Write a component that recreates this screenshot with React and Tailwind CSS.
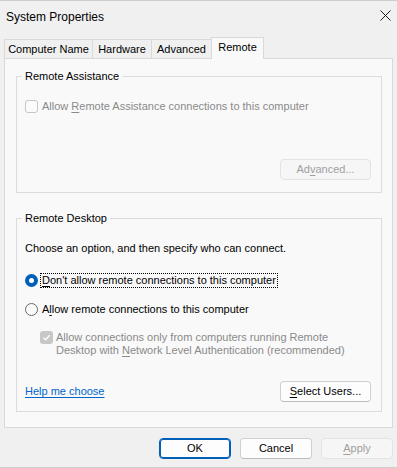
import { useState } from 'react';

const FONT = { fontFamily: '"Liberation Sans", Arial, sans-serif' };

function Tab({ label, selected }) {
  if (selected) {
    return (
      <div className="relative z-10 -mb-px h-[22px] w-[53px] border border-b-0 border-[#d9d9d9] bg-[#f9f9f9] flex items-center justify-center whitespace-nowrap pb-[2px] text-[11px] text-black">
        {label}
      </div>
    );
  }
  return (
    <div className="h-[19px] border-t border-l border-[#d9d9d9] bg-[#f0f0f0] flex items-center justify-center whitespace-nowrap text-[11px] text-black">
      {label}
    </div>
  );
}

function CheckBox({ checked }) {
  if (checked) {
    return (
      <span className="w-[13px] h-[13px] shrink-0 rounded-[3px] bg-[#c7c7c7] flex items-center justify-center">
        <svg width="9" height="9" viewBox="0 0 9 9">
          <path d="M1.5 4.7 L3.6 6.8 L7.6 2.2" fill="none" stroke="#ffffff" strokeWidth="1.3" />
        </svg>
      </span>
    );
  }
  return <span className="w-[13px] h-[13px] shrink-0 rounded-[3px] border border-[#c6c6c6] bg-[#fbfbfb]" />;
}

function Radio({ checked, onClick }) {
  if (checked) {
    return (
      <span onClick={onClick} className="w-[13px] h-[13px] shrink-0 rounded-full bg-[#005fb8] flex items-center justify-center">
        <span className="w-[5px] h-[5px] rounded-full bg-white" />
      </span>
    );
  }
  return <span onClick={onClick} className="w-[13px] h-[13px] shrink-0 rounded-full border border-[#6a6a6a] bg-[#fafafa]" />;
}

function Button({ children, disabled, primary, className = '' }) {
  const base = 'h-[21px] rounded-[4px] flex items-center justify-center text-[11px]';
  if (disabled) {
    return <div className={`${base} border border-[#e3e3e3] bg-[#f6f6f6] text-[#a0a0a0] ${className}`}>{children}</div>;
  }
  if (primary) {
    return <div className={`${base} border border-[#005fb8] bg-[#fdfdfd] text-black shadow-[inset_0_0_0_1px_#005fb8] ${className}`}>{children}</div>;
  }
  return <div className={`${base} border border-[#d0d0d0] border-b-[#bcbcbc] bg-[#fdfdfd] text-black ${className}`}>{children}</div>;
}

function Group({ title, children, className = '' }) {
  return (
    <fieldset className={`w-[366px] border border-[#dcdcdc] ${className}`}>
      <legend className="ml-[5px] px-[3px] text-[11px] leading-[14px] text-black">{title}</legend>
      {children}
    </fieldset>
  );
}

export default function App() {
  const [remote, setRemote] = useState(false);

  return (
    <div style={FONT} className="w-[397px] h-[468px] bg-[#f0f0f0] border-t border-b border-[#cdcdcd] flex flex-col select-none">
      <div className="h-[36px] shrink-0 flex items-start justify-between pl-[6px] pr-[6px]">
        <span className="mt-[8px] text-[12px] leading-[16px] text-black">System Properties</span>
        <svg className="mt-[9px]" width="11" height="11" viewBox="0 0 11 11">
          <path d="M0.5 0.5 L10.5 10.5 M10.5 0.5 L0.5 10.5" stroke="#1b1b1b" strokeWidth="1" />
        </svg>
      </div>

      <div className="h-[21px] shrink-0 flex items-end px-[4px]">
        <div className="w-[88px]"><Tab label="Computer Name" /></div>
        <div className="w-[59px]"><Tab label="Hardware" /></div>
        <div className="w-[60px]"><Tab label="Advanced" /></div>
        <Tab label="Remote" selected />
      </div>

      <div className="mx-[4px] w-[389px] h-[370px] shrink-0 border border-[#d9d9d9] bg-[#f9f9f9] pt-[10px] pl-[11px]">
        <Group title="Remote Assistance">
          <div className="pt-[15px] pl-[8px] pr-[10px] pb-[12px]">
            <div className="h-[16px] flex items-center gap-[4px] text-[11px] text-[#8a8a8a]">
              <CheckBox />
              <span>Allow <span className="underline underline-offset-2">R</span>emote Assistance connections to this computer</span>
            </div>
            <div className="mt-[45px] flex justify-end">
              <Button disabled className="w-[91px]">Ad<span className="underline underline-offset-2">v</span>anced...</Button>
            </div>
          </div>
        </Group>

        <Group title="Remote Desktop" className="mt-[18px]">
          <div className="pt-[15px] pl-[8px] pr-[10px] pb-[9px] text-[11px] text-black">
            <div className="h-[16px] leading-[16px]">Choose an option, and then specify who can connect.</div>

            <div className="mt-[16px] h-[16px] flex items-center gap-[2px]">
              <Radio checked={!remote} onClick={() => setRemote(false)} />
              <span className="border border-dotted border-black px-[1px] leading-[13px]"><span className="underline underline-offset-2">D</span>on't allow remote connections to this computer</span>
            </div>

            <div className="mt-[13px] h-[16px] flex items-center gap-[4px]">
              <Radio checked={remote} onClick={() => setRemote(true)} />
              <span>A<span className="underline underline-offset-2">l</span>low remote connections to this computer</span>
            </div>

            <div className="mt-[14px] ml-[15px] flex items-start gap-[3px] text-[#8a8a8a] leading-[13px]">
              <CheckBox checked />
              <div>
                <div className="h-[13px]">Allow connections only from computers running Remote</div>
                <div className="h-[13px]">Desktop with <span className="underline underline-offset-2">N</span>etwork Level Authentication (recommended)</div>
              </div>
            </div>

            <div className="mt-[24px] flex items-center justify-between">
              <span className="text-[#0066cc] underline underline-offset-2">Help me choose</span>
              <Button className="w-[91px]"><span className="underline underline-offset-2">S</span>elect Users...</Button>
            </div>
          </div>
        </Group>
      </div>

      <div className="mt-[10px] flex justify-end gap-[9px] pr-[4px]">
        <Button primary className="w-[72px]">OK</Button>
        <Button className="w-[72px]">Cancel</Button>
        <Button disabled className="w-[72px]"><span className="underline underline-offset-2">A</span>pply</Button>
      </div>
    </div>
  );
}
